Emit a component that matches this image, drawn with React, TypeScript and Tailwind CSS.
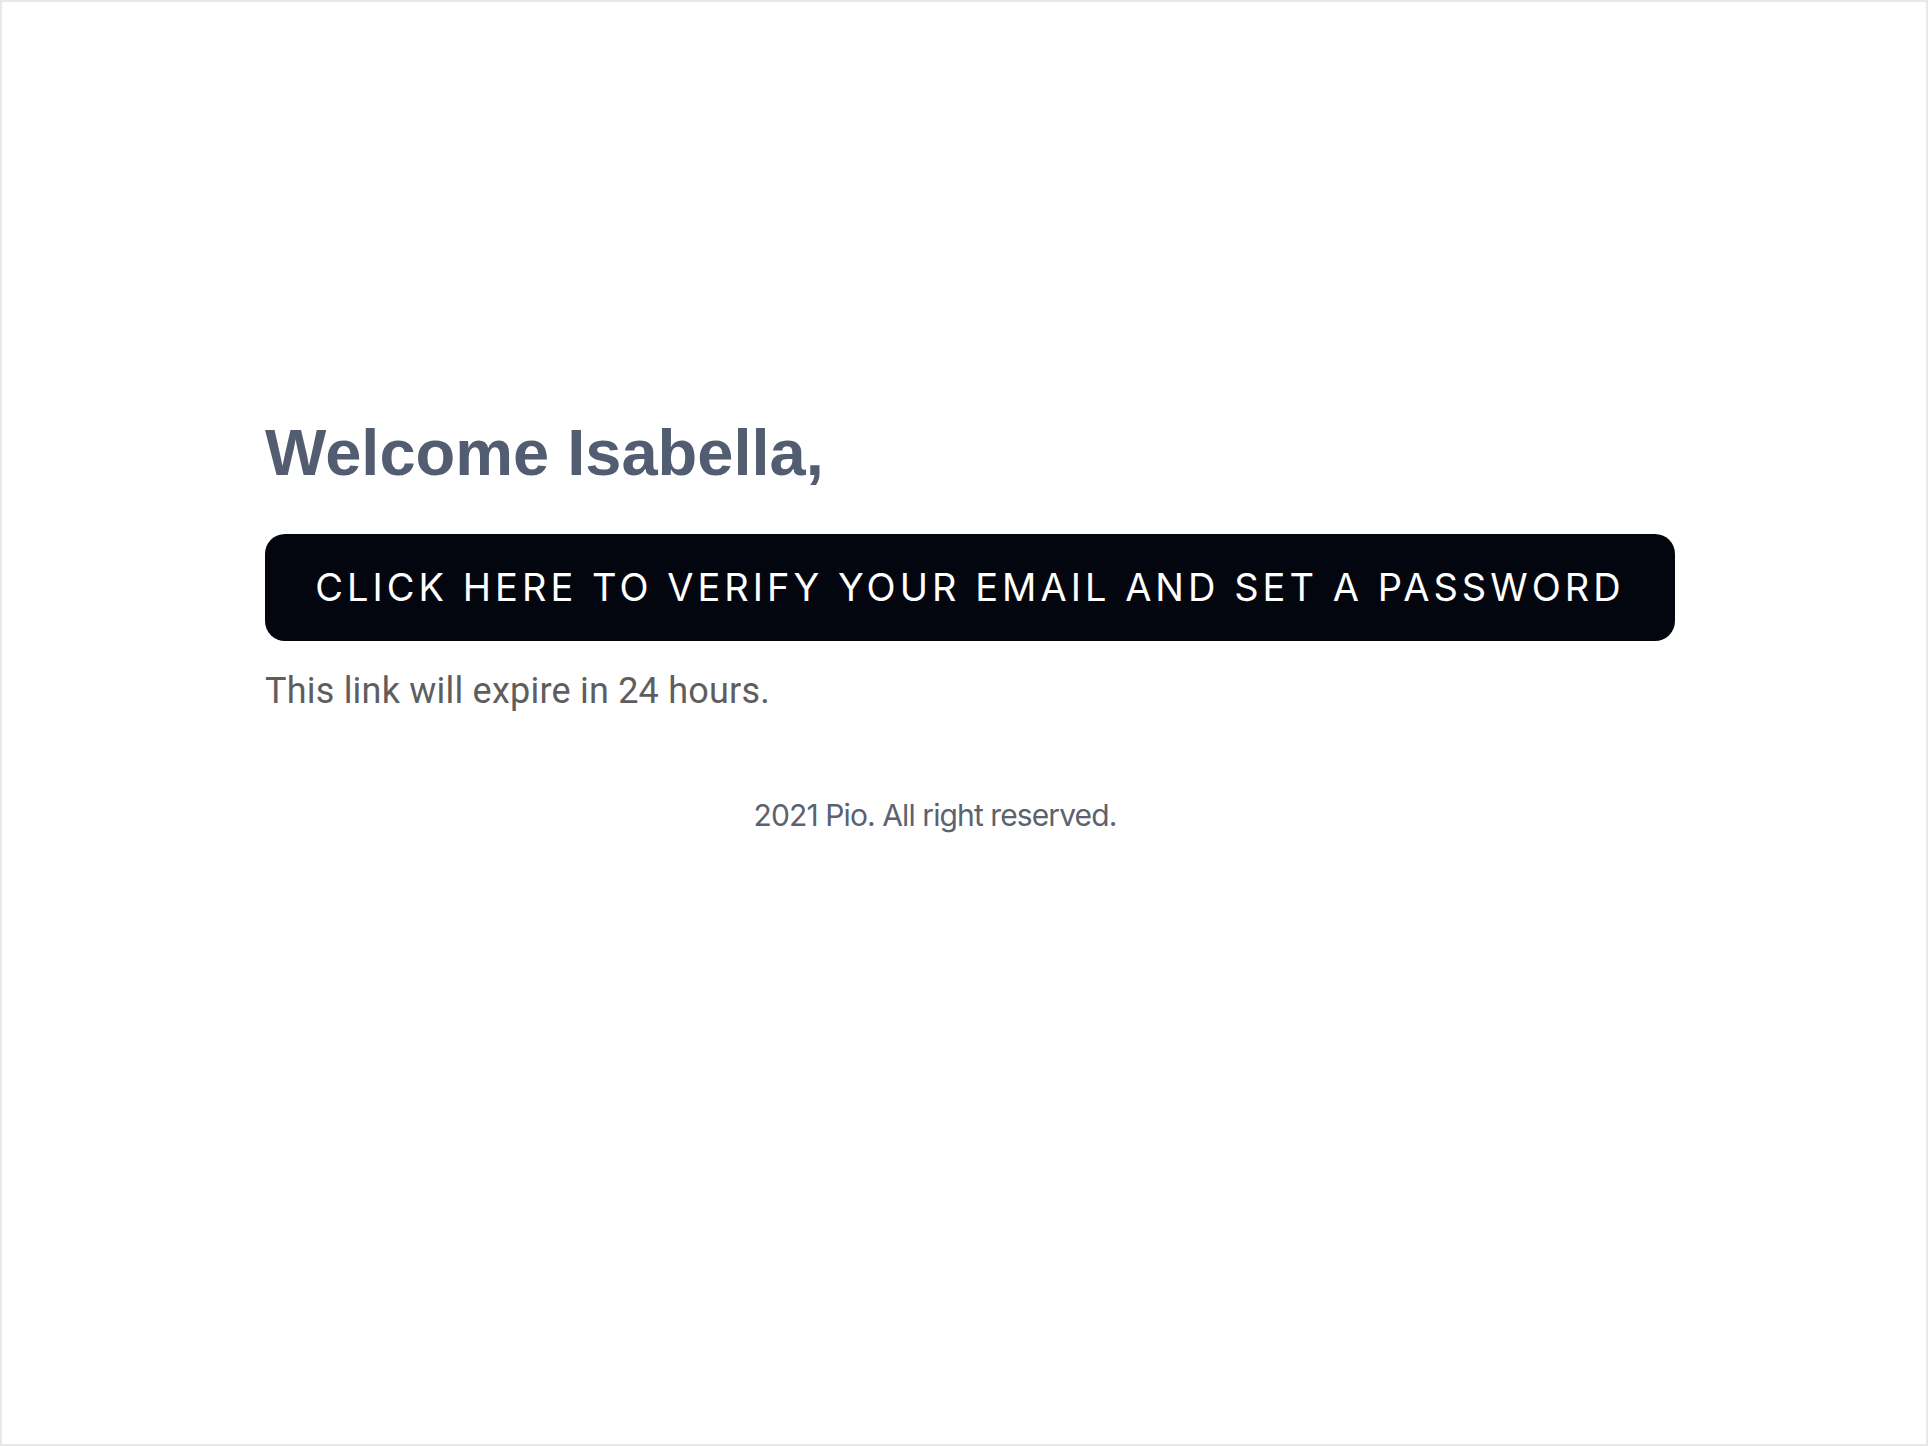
export default function App() {
  return (
    <div className="w-[1928px] h-[1446px] bg-white border-2 border-[#e8e8e8] box-border">
      <div className="ml-[263px] w-[1410px] pt-[415px] flex flex-col">
        <h1 className="font-['Liberation_Sans',Arial,sans-serif] text-[65px] leading-[72px] font-bold text-[#535d71]">
          Welcome Isabella,
        </h1>
        <div className="mt-[45px] h-[107px] w-[1410px] rounded-[20px] bg-[#03060e] flex items-center justify-center font-['Inter',sans-serif] text-white text-[38px] tracking-[0.106em]">
          CLICK HERE TO VERIFY YOUR EMAIL AND SET A PASSWORD
        </div>
        <p className="mt-[28px] font-['Roboto',sans-serif] text-[36px] leading-[44px] tracking-[0.006em] text-[#5e5e5e]">
          This link will expire in 24 hours.
        </p>
        <div className="mt-[82px] flex justify-center pr-[70px]">
          <span className="font-['Inter',sans-serif] text-[30px] leading-[40px] text-[#5b6270] tracking-[-0.03em]">
            2021 Pio. All right reserved.
          </span>
        </div>
      </div>
    </div>
  );
}
